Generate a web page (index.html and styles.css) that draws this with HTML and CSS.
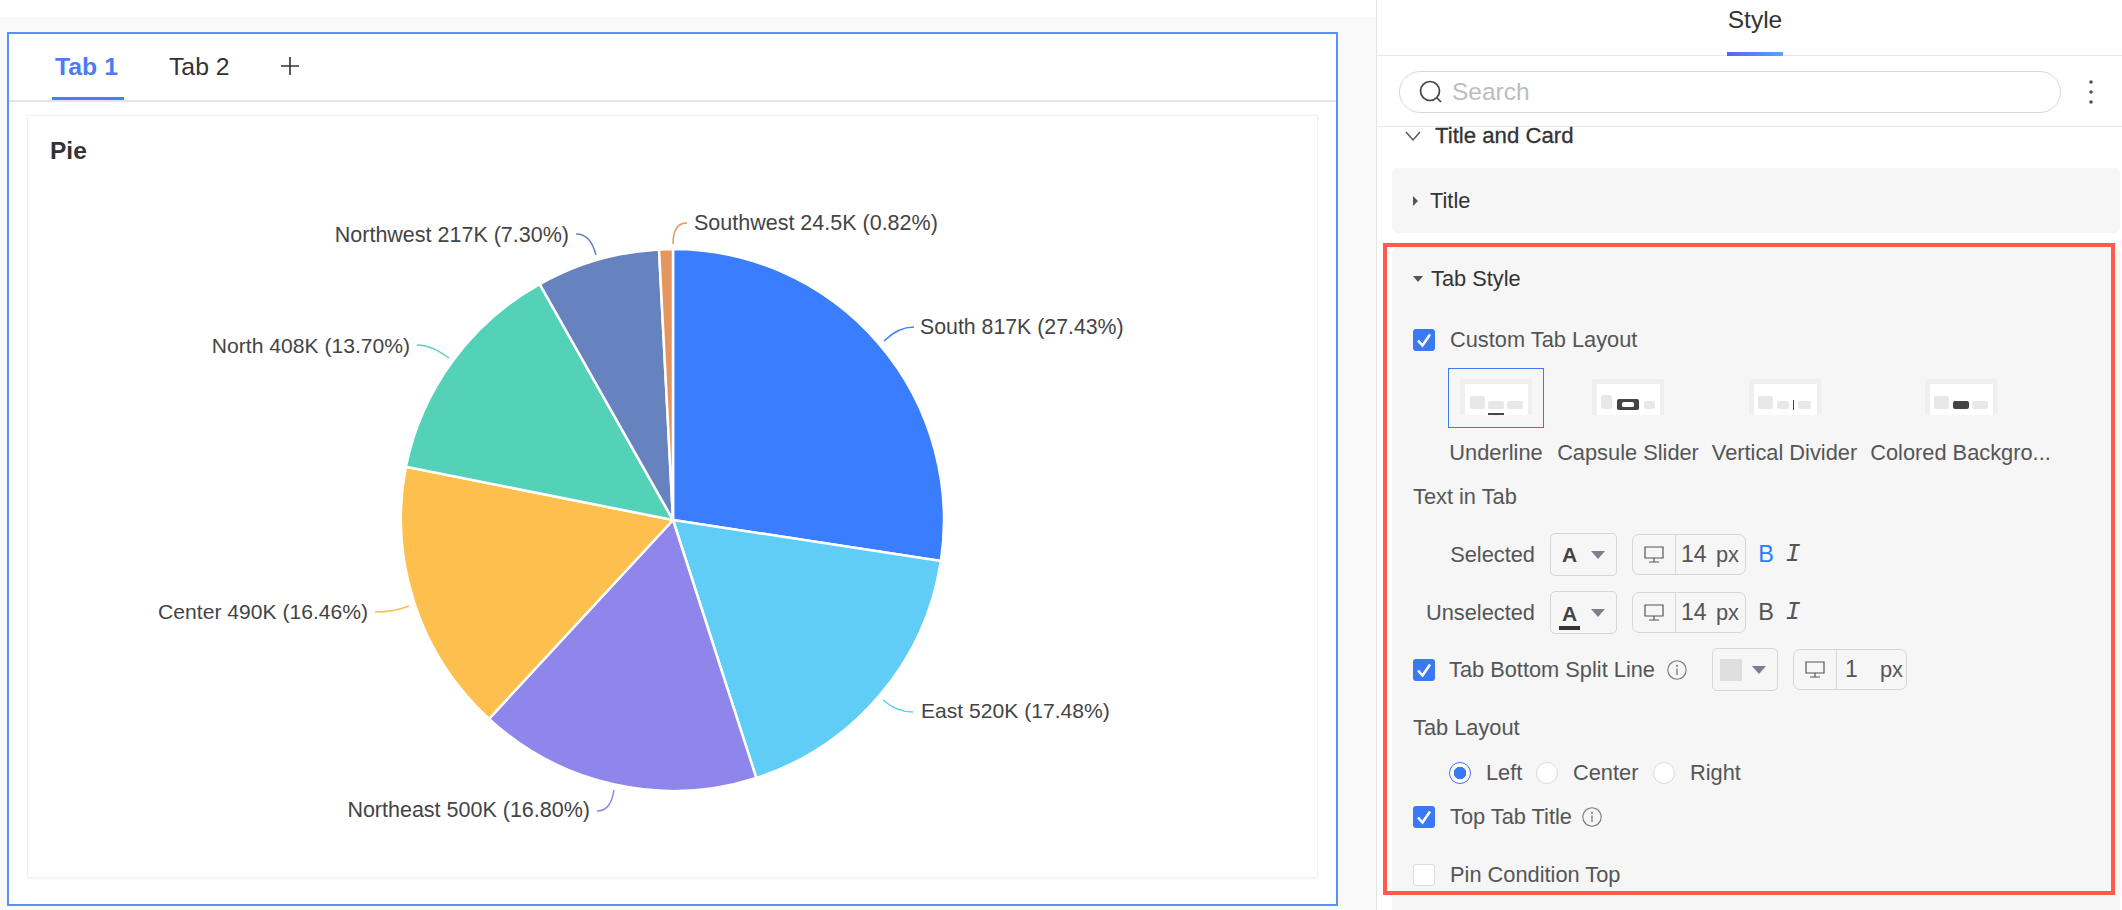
FILE: index.html
```html
<!DOCTYPE html>
<html lang="en">
<head>
<meta charset="utf-8">
<title>Tab Style</title>
<link rel="stylesheet" href="styles.css">
</head>
<body>
<div class="app">
  <main class="workspace">
    <section class="frame">
      <nav class="tabs">
        <span class="tab tab-active">Tab 1</span>
        <span class="tab">Tab 2</span>
        <svg class="plus" width="20" height="20" viewBox="0 0 20 20"><path d="M10 1v18M1 10h18" stroke="#333" stroke-width="1.6" fill="none"/></svg>
      </nav>
      <article class="card">
        <h2 class="card-title">Pie</h2>
        <svg class="chart" viewBox="29 170 1288 700" width="1288" height="700">
          <g stroke="#fff" stroke-width="2.5" stroke-linejoin="round">
            <path fill="#3a7dff" d="M674 520V249A271 271 0 0 1 941.900 560.900Z"/>
            <path fill="#60cdf6" d="M674 520L941.900 560.900A271 271 0 0 1 757.300 777.900Z"/>
            <path fill="#8f86ec" d="M674 520L757.300 777.900A271 271 0 0 1 490 718.800Z"/>
            <path fill="#fdbf4d" d="M674 520L490 718.800A271 271 0 0 1 406.900 466.800Z"/>
            <path fill="#54d2b8" d="M674 520L406.900 466.800A271 271 0 0 1 540.700 284.200Z"/>
            <path fill="#6683bf" d="M674 520L540.700 284.200A271 271 0 0 1 660 249.400Z"/>
            <path fill="#e5965f" d="M674 520L660 249.400A271 271 0 0 1 674 249Z"/>
          </g>
          <g fill="none" stroke-width="1.5">
            <path stroke="#e5965f" d="M674 244C674 232 678 223 688 223"/>
            <path stroke="#6683bf" d="M597 255C594 243 588 234 577 234"/>
            <path stroke="#3a7dff" d="M885 341C893 333 903 327 915 327"/>
            <path stroke="#54d2b8" d="M450 358C440 351 430 345 418 345"/>
            <path stroke="#fdbf4d" d="M410 606C400 610 388 612 376 612"/>
            <path stroke="#60cdf6" d="M884 700C892 707 902 712 914 712"/>
            <path stroke="#8f86ec" d="M615 790C613 802 609 811 598 811"/>
          </g>
          <g class="chart-labels">
            <text class="label-wide" x="695" y="230">Southwest 24.5K (0.82%)</text>
            <text class="label-wide" x="570" y="242" text-anchor="end">Northwest 217K (7.30%)</text>
            <text class="label-mid" x="921" y="334">South 817K (27.43%)</text>
            <text x="411" y="353" text-anchor="end">North 408K (13.70%)</text>
            <text x="369" y="619" text-anchor="end">Center 490K (16.46%)</text>
            <text x="922" y="718">East 520K (17.48%)</text>
            <text class="label-wide" x="591" y="817" text-anchor="end">Northeast 500K (16.80%)</text>
          </g>
        </svg>
      </article>
    </section>
  </main>

  <aside class="sidebar">
    <header class="side-head"><span class="side-tab">Style</span></header>
    <div class="search-row">
      <div class="search">
        <svg width="26" height="26" viewBox="0 0 26 26"><circle cx="12" cy="12" r="9.500" fill="none" stroke="#444" stroke-width="1.700"/><path d="M19 19l4 4" stroke="#444" stroke-width="1.700"/></svg>
        <span class="search-text">Search</span>
      </div>
      <svg class="dots" width="6" height="26" viewBox="0 0 6 26"><circle cx="3" cy="3" r="1.800" fill="#555"/><circle cx="3" cy="13" r="1.800" fill="#555"/><circle cx="3" cy="23" r="1.800" fill="#555"/></svg>
    </div>
    <div class="side-body">
      <div class="section-head">
        <svg width="16" height="10" viewBox="0 0 16 10"><path d="M1 1l7 8 7-8" fill="none" stroke="#555" stroke-width="1.400"/></svg>
        <span>Title and Card</span>
      </div>
      <div class="panel panel-title">
        <svg width="5" height="12" viewBox="0 0 5 12"><path d="M0 1l5 5-5 5z" fill="#555"/></svg>
        <span class="panel-name">Title</span>
      </div>
      <div class="panel panel-tab">
        <div class="panel-head">
          <svg width="10" height="6" viewBox="0 0 10 6"><path d="M0 0h10L5 6z" fill="#555"/></svg>
          <span class="panel-name">Tab Style</span>
        </div>
        <label class="check-row row-custom"><span class="check"><svg width="22" height="22" viewBox="0 0 22 22"><path d="M5 11.500l4.500 5L17 5.500" fill="none" stroke="#fff" stroke-width="2.600"/></svg></span>Custom Tab Layout</label>
        <div class="options">
          <div class="option opt-a">
            <div class="thumb thumb-on"><svg width="72" height="36" viewBox="0 0 72 36"><path fill="#efefef" d="M2 0h68a2 2 0 0 1 2 2v34H0V2a2 2 0 0 1 2-2z"/><path fill="#fff" d="M5 5h63v31H5z"/><rect x="10" y="17" width="15" height="13" rx="2" fill="#e8e8e8"/><rect x="28" y="22" width="16" height="8" rx="2" fill="#e8e8e8"/><rect x="47" y="22" width="16" height="8" rx="2" fill="#e8e8e8"/><path fill="#444" d="M28 34h16v2H28z"/></svg></div>
            <span>Underline</span>
          </div>
          <div class="option opt-b">
            <div class="thumb"><svg width="72" height="36" viewBox="0 0 72 36"><path fill="#efefef" d="M2 0h68a2 2 0 0 1 2 2v34H0V2a2 2 0 0 1 2-2z"/><path fill="#fff" d="M5 5h63v31H5z"/><rect x="9" y="16" width="11" height="14" rx="2" fill="#e8e8e8"/><rect x="25" y="20" width="22" height="11" rx="2" fill="#444"/><rect x="30" y="23" width="12" height="5" rx="1.500" fill="#fff"/><rect x="52" y="22" width="11" height="8" rx="2" fill="#e8e8e8"/></svg></div>
            <span>Capsule Slider</span>
          </div>
          <div class="option opt-c">
            <div class="thumb"><svg width="72" height="36" viewBox="0 0 72 36"><path fill="#efefef" d="M2 0h68a2 2 0 0 1 2 2v34H0V2a2 2 0 0 1 2-2z"/><path fill="#fff" d="M5 5h63v31H5z"/><rect x="9" y="17" width="15" height="13" rx="2" fill="#e8e8e8"/><rect x="28" y="22" width="12" height="8" rx="2" fill="#e8e8e8"/><path fill="#444" d="M44 21h1v10h-1z"/><rect x="49" y="22" width="13" height="8" rx="2" fill="#e8e8e8"/></svg></div>
            <span>Vertical Divider</span>
          </div>
          <div class="option opt-d">
            <div class="thumb"><svg width="72" height="36" viewBox="0 0 72 36"><path fill="#efefef" d="M2 0h68a2 2 0 0 1 2 2v34H0V2a2 2 0 0 1 2-2z"/><path fill="#fff" d="M5 5h63v31H5z"/><rect x="9" y="17" width="15" height="13" rx="2" fill="#e8e8e8"/><rect x="28" y="22" width="16" height="8" rx="2" fill="#444"/><rect x="47" y="22" width="16" height="8" rx="2" fill="#e8e8e8"/></svg></div>
            <span>Colored Backgro...</span>
          </div>
        </div>
        <div class="field-title row-text">Text in Tab</div>
        <div class="style-row row-selected">
          <span class="style-label">Selected</span>
          <div class="picker"><span class="letter">A</span><svg width="14" height="8" viewBox="0 0 14 8"><path d="M0 0h14L7 8z" fill="#7b7f8e"/></svg></div>
          <div class="size">
            <span class="size-icon"><svg width="20" height="18" viewBox="0 0 20 18"><path d="M1 1h18v11H1zM10 12v4M5 16h10" fill="none" stroke="#555" stroke-width="1.200"/></svg></span>
            <span class="size-val">14</span><span class="size-unit">px</span>
          </div>
          <span class="fmt fmt-on">B</span><span class="fmt fmt-i">I</span>
        </div>
        <div class="style-row row-unselected">
          <span class="style-label">Unselected</span>
          <div class="picker"><span class="letter letter-line">A</span><svg width="14" height="8" viewBox="0 0 14 8"><path d="M0 0h14L7 8z" fill="#7b7f8e"/></svg></div>
          <div class="size">
            <span class="size-icon"><svg width="20" height="18" viewBox="0 0 20 18"><path d="M1 1h18v11H1zM10 12v4M5 16h10" fill="none" stroke="#555" stroke-width="1.200"/></svg></span>
            <span class="size-val">14</span><span class="size-unit">px</span>
          </div>
          <span class="fmt">B</span><span class="fmt fmt-i">I</span>
        </div>
        <div class="style-row row-split">
          <span class="check"><svg width="22" height="22" viewBox="0 0 22 22"><path d="M5 11.500l4.500 5L17 5.500" fill="none" stroke="#fff" stroke-width="2.600"/></svg></span>
          <span class="split-label">Tab Bottom Split Line</span>
          <svg class="info" width="20" height="20" viewBox="0 0 20 20"><circle cx="10" cy="10" r="9.200" fill="none" stroke="#777" stroke-width="1.100"/><path d="M10 8.500v6.500" stroke="#777" stroke-width="1.300"/><circle cx="10" cy="5.800" r="1" fill="#777"/></svg>
          <div class="picker picker-swatch"><span class="swatch"></span><svg width="14" height="8" viewBox="0 0 14 8"><path d="M0 0h14L7 8z" fill="#7b7f8e"/></svg></div>
          <div class="size">
            <span class="size-icon"><svg width="20" height="18" viewBox="0 0 20 18"><path d="M1 1h18v11H1zM10 12v4M5 16h10" fill="none" stroke="#555" stroke-width="1.200"/></svg></span>
            <span class="size-val size-val-one">1</span><span class="size-unit">px</span>
          </div>
        </div>
        <div class="field-title row-layout">Tab Layout</div>
        <div class="radio-row">
          <span class="radio radio-on"></span><span class="radio-text r-left">Left</span>
          <span class="radio"></span><span class="radio-text r-center">Center</span>
          <span class="radio"></span><span class="radio-text">Right</span>
        </div>
        <label class="check-row row-top"><span class="check"><svg width="22" height="22" viewBox="0 0 22 22"><path d="M5 11.500l4.500 5L17 5.500" fill="none" stroke="#fff" stroke-width="2.600"/></svg></span>Top Tab Title<svg class="info info-top" width="20" height="20" viewBox="0 0 20 20"><circle cx="10" cy="10" r="9.200" fill="none" stroke="#777" stroke-width="1.100"/><path d="M10 8.500v6.500" stroke="#777" stroke-width="1.300"/><circle cx="10" cy="5.800" r="1" fill="#777"/></svg></label>
        <label class="check-row row-pin"><span class="check check-off"></span>Pin Condition Top</label>
      </div>
      <div class="highlight"></div>
    </div>
  </aside>
</div>
</body>
</html>
```

FILE: styles.css
```css
* { box-sizing: border-box; }
html, body { margin: 0; height: 100%; background: #fff; overflow: hidden; }
body { font-family: "Liberation Sans", Arial, sans-serif; color: #555; font-size: 21.800px; }

.app { display: flex; width: 2122px; height: 910px; }

.workspace { flex: 0 0 1376px; margin-top: 17px; padding: 15px 38px 4px 7px; background: #f9f9f9; display: flex; }
.frame { flex: 1; border: 2px solid #5a90fb; background: #fff; display: flex; flex-direction: column; min-width: 0; }

.tabs { height: 68px; flex: none; display: flex; align-items: flex-start; border-bottom: 2px solid #e6e6e6; padding-left: 43px; position: relative; }
.tab { font-size: 24.800px; line-height: 66px; color: #333; height: 66px; padding: 0 3px; margin-right: 47px; }
.tab-active { font-weight: 700; color: #4b7bf5; border-bottom: 3px solid #4b7bf5; padding: 0 6px 0 3px; margin-right: 42px; }
.plus { margin: 22px 0 0 0; }

.card { margin: 13px 18px 0 18px; height: 763px; flex: none; background: #fff; border: 1px solid #f1f1f1; box-shadow: 0 1px 3px rgba(0, 0, 0, .05); display: flex; flex-direction: column; }
.card-title { margin: 21px 0 5px 22px; font-size: 24.500px; line-height: 28px; font-weight: 700; color: #333; }
.chart { display: block; flex: none; }
.chart-labels { font-family: "Liberation Sans", Arial, sans-serif; font-size: 21.100px; fill: #444; }
.label-wide { font-size: 21.500px; }
.label-mid { font-size: 21.300px; }

.sidebar { flex: 0 0 746px; border-left: 1px solid #e4e4e4; background: #fff; display: flex; flex-direction: column; height: 910px; overflow: hidden; }
.side-head { height: 56px; flex: none; border-bottom: 1px solid #e8e8e8; display: flex; justify-content: center; padding-left: 11px; }
.side-tab { height: 56px; margin-bottom: -1px; font-size: 24.500px; line-height: 40px; color: #333; border-bottom: 4px solid; border-image: linear-gradient(90deg, #5a63f5, #56a4fb) 1; padding: 0 1px; position: relative; }
.search-row { height: 71px; flex: none; border-bottom: 1px solid #e8e8e8; display: flex; align-items: center; padding: 1px 28px 0 22px; justify-content: space-between; }
.search { width: 662px; height: 42px; border: 1px solid #d8d8d8; border-radius: 22px; display: flex; align-items: center; padding-left: 18px; gap: 8px; background: #fff; }
.search-text { font-size: 24.500px; color: #bdbdbd; }
.dots { flex: none; }

.side-body { flex: 1; position: relative; padding: 0 2px 0 15px; min-height: 0; }
.section-head { height: 40px; margin-top: -11px; display: flex; align-items: center; padding-left: 13px; gap: 14px; color: #333; -webkit-text-stroke: .3px #333; font-size: 22.200px; }
.panel { background: #f6f6f6; border-radius: 6px; }
.panel-title { margin-top: 12px; height: 65px; display: flex; align-items: center; padding-left: 21px; gap: 12px; }
.panel-name { color: #333; font-size: 21.800px; }
.panel-tab { margin-top: 14px; height: 700px; padding-left: 21px; }
.panel-head { height: 64px; display: flex; align-items: center; gap: 8px; }

.check { width: 22px; height: 22px; border-radius: 3px; background: #3a78f6; flex: none; display: block; }
.check svg { display: block; }
.check-off { background: #fff; border: 1px solid #ddd; }
.check-row { display: flex; align-items: center; height: 22px; gap: 15px; line-height: 22px; }
.row-custom { margin-top: 18px; }

.options { display: flex; margin: 17px 0 0 35px; gap: 15px; }
.option { display: flex; flex-direction: column; align-items: center; flex: none; white-space: nowrap; }
.option span { line-height: 20px; margin-top: 15px; }
.opt-a { width: 96px; margin-right: -1px; }
.opt-b { width: 140px; }
.opt-c { width: 143px; }
.opt-d { width: 179px; }
.thumb { width: 96px; height: 60px; display: flex; align-items: flex-end; justify-content: center; padding-bottom: 12px; border: 1px solid transparent; }
.thumb svg { display: block; flex: none; }
.thumb-on { border-color: #3a78f6; }

.field-title { line-height: 20px; color: #555; }
.row-text { margin-top: 24px; }
.row-layout { margin-top: 27px; }

.style-row { display: flex; align-items: center; height: 43px; }
.row-selected { margin-top: 26px; }
.row-unselected { margin-top: 15px; }
.row-split { margin-top: 14px; }
.style-label { width: 122px; text-align: right; margin-right: 15px; }
.picker { width: 67px; height: 43px; border: 1px solid #d6d6d6; border-radius: 5px; display: flex; align-items: center; padding-left: 8px; gap: 11px; flex: none; }
.letter { width: 21px; font-size: 21px; font-weight: 700; color: #444; line-height: 24px; text-align: center; }
.letter-line { border-bottom: 4px solid #333; height: 30px; line-height: 28px; margin-top: 4px; }
.size { width: 114px; height: 41px; margin-left: 15px; border: 1px solid #d6d6d6; border-radius: 7px; display: flex; align-items: center; flex: none; }
.size-icon { width: 43px; height: 100%; border-right: 1px solid #d6d6d6; display: flex; align-items: center; justify-content: center; flex: none; }
.size-val { margin-left: 5px; width: 32px; font-size: 23px; }
.size-val-one { margin-left: 8px; }
.size-unit { margin-left: 3px; }
.fmt { font-size: 23.500px; width: 16px; text-align: center; margin-left: 12px; color: #555; }
.fmt-on { color: #2f7bff; }
.fmt-i { font-style: italic; margin-left: 11px; font-family: "Liberation Mono", monospace; font-size: 25px; }
.split-label { margin-left: 14px; white-space: nowrap; width: 208px; }
.info { flex: none; }
.row-split .info { margin-left: 10px; }
.picker-swatch { margin-left: 25px; width: 66px; padding-left: 7px; gap: 10px; }
.swatch { width: 22px; height: 22px; background: #dedede; flex: none; }

.radio-row { display: flex; align-items: center; height: 22px; margin: 24px 0 0 36px; }
.radio { width: 22px; height: 22px; border-radius: 50%; border: 1px solid #dcdcdc; background: #fff; flex: none; }
.radio-on { border-color: #3a78f6; background: radial-gradient(circle, #3a78f6 0 6px, #fff 6.500px); }
.radio-text { margin-left: 15px; }
.r-left { width: 50px; }
.r-center { width: 80px; }

.row-top { margin-top: 22px; }
.info-top { margin-left: -5px; }
.row-pin { margin-top: 36px; }

.highlight { position: absolute; left: 6px; top: 116px; width: 732px; height: 652px; border: 4px solid #ff5a4d; pointer-events: none; }
```
